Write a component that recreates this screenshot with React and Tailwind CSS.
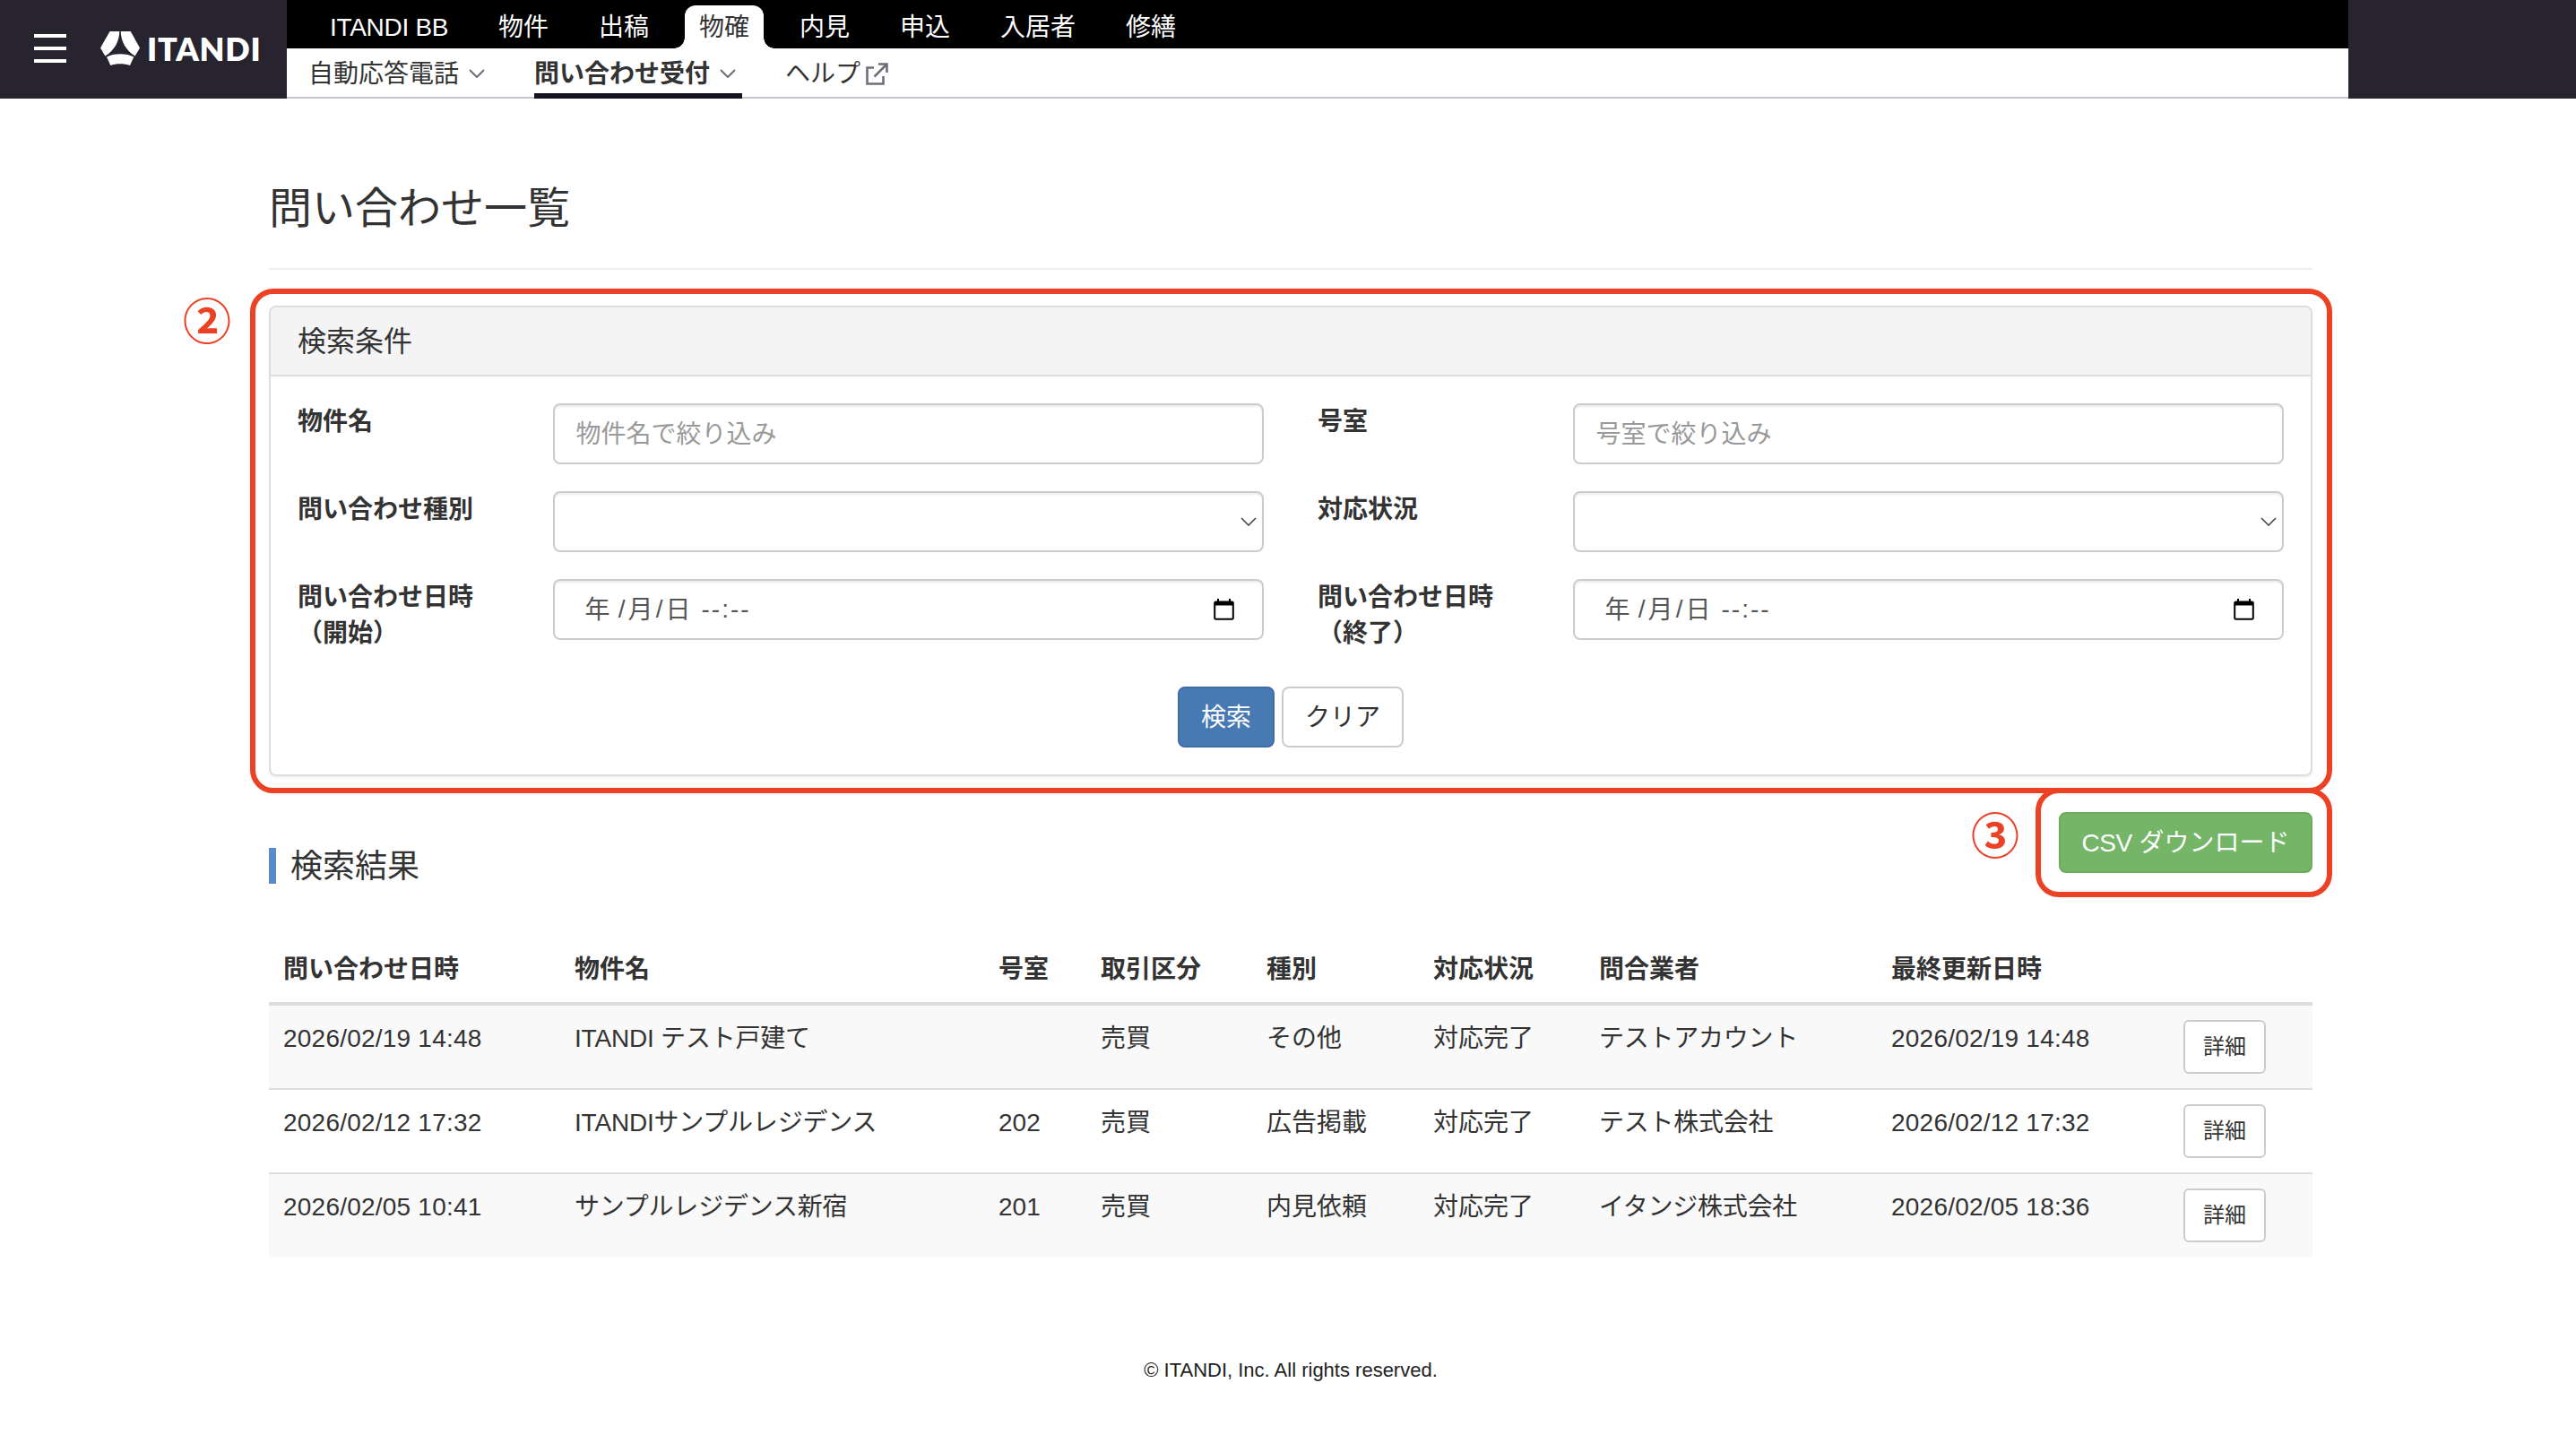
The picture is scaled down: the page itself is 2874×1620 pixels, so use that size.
const tabs = ['物件', '出稿', '物確', '内見', '申込', '入居者', '修繕'];

const columns = [
	{ label: '問い合わせ日時', key: 'askedAt', width: 'w-[325px]' },
	{ label: '物件名', key: 'name', width: 'w-[473px]' },
	{ label: '号室', key: 'room', width: 'w-[114px]' },
	{ label: '取引区分', key: 'deal', width: 'w-[185px]' },
	{ label: '種別', key: 'type', width: 'w-[186px]' },
	{ label: '対応状況', key: 'status', width: 'w-[185px]' },
	{ label: '問合業者', key: 'agent', width: 'w-[326px]' },
	{ label: '最終更新日時', key: 'updatedAt', width: 'w-[326px]' },
];

// letter spacing per column
const tracking = {
	askedAt: 'tracking-[0.22px]',
	name: 'tracking-[-0.2px]',
	agent: 'tracking-[-0.25px]',
	updatedAt: 'tracking-[0.22px]',
};

const inquiries = [
	{
		askedAt: '2026/02/19 14:48',
		name: 'ITANDI テスト戸建て',
		room: '',
		deal: '売買',
		type: 'その他',
		status: '対応完了',
		agent: 'テストアカウント',
		updatedAt: '2026/02/19 14:48',
	},
	{
		askedAt: '2026/02/12 17:32',
		name: 'ITANDIサンプルレジデンス',
		room: '202',
		deal: '売買',
		type: '広告掲載',
		status: '対応完了',
		agent: 'テスト株式会社',
		updatedAt: '2026/02/12 17:32',
	},
	{
		askedAt: '2026/02/05 10:41',
		name: 'サンプルレジデンス新宿',
		room: '201',
		deal: '売買',
		type: '内見依頼',
		status: '対応完了',
		agent: 'イタンジ株式会社',
		updatedAt: '2026/02/05 18:36',
	},
];

const inputClass =
	'flex items-center h-[68px] w-full rounded-lg border-2 border-[#ccc] bg-white shadow-[inset_0_2px_2px_rgba(0,0,0,0.075)]';

function Chevron({ className }) {
	return (
		<svg
			viewBox="0 0 18 10"
			className={className}
			fill="none"
			stroke="currentColor"
		>
			<path d="M1 1l8 8 8-8" />
		</svg>
	);
}

function Logo() {
	return (
		<div className="flex items-center ml-[38px] mb-[2px]">
			<svg viewBox="0 0 44 38" className="w-11 h-[38px]" fill="#fff">
				<path d="M10.500 0H21.300C21 11 16 21 5.300 27.500L0 18.500Z" />
				<path d="M22.700 0H33.700L44 18.500L38.700 27.500C28 21 23 11 22.700 0Z" />
				<path d="M7 28.500C14 24 30 24 37.300 28.500L33 38C27 35.500 17 35.500 11.300 38Z" />
			</svg>
			<span className="ml-2 text-[36px] leading-none font-extrabold tracking-[0.8px] text-white font-['Lato','Noto_Sans_CJK_JP',sans-serif]">
				ITANDI
			</span>
		</div>
	);
}

function Header() {
	return (
		<header className="flex h-[110px] bg-[#27242f]">
			<div className="flex items-center w-[320px] pl-[38px]">
				<div className="flex flex-col gap-[10px] mb-[2px]">
					<span className="w-9 h-1 bg-white" />
					<span className="w-9 h-1 bg-white" />
					<span className="w-9 h-1 bg-white" />
				</div>
				<Logo />
			</div>
			<div className="flex flex-col w-[2300px] bg-white">
				<nav className="flex items-end h-[54px] pl-8 bg-black text-white">
					<span className="w-[176px] h-12 px-4 leading-[50px] whitespace-nowrap tracking-[-0.3px]">
						ITANDI BB
					</span>
					{tabs.map((tab) =>
						tab === '物確' ? (
							<span
								key={tab}
								className="relative h-12 mx-3 px-4 leading-[50px] bg-white text-[#333] rounded-t-[12px]"
							>
								{tab}
								{/* flared feet of the active tab */}
								<span className="absolute bottom-0 -left-3 size-3 bg-[radial-gradient(circle_at_0_0,#000_11.500px,#fff_12px)]" />
								<span className="absolute bottom-0 -right-3 size-3 bg-[radial-gradient(circle_at_100%_0,#000_11.500px,#fff_12px)]" />
							</span>
						) : (
							<span
								key={tab}
								className="h-12 mx-3 px-4 leading-[50px]"
							>
								{tab}
							</span>
						)
					)}
				</nav>
				<nav className="flex gap-12 h-14 pl-6 border-b-2 border-[#c6c5cd]">
					<span className="flex items-center h-14 w-[204px]">
						<span className="pt-[2px]">自動応答電話</span>
						<Chevron className="ml-[11px] w-[18px] h-[10px] text-[#6f6e7a] stroke-2" />
					</span>
					<span className="flex items-center h-14 w-[232px] pt-[6px] border-b-[6px] border-[#151320] font-bold">
						<span className="pt-[2px]">問い合わせ受付</span>
						<Chevron className="ml-[11px] w-[18px] h-[10px] text-[#6f6e7a] stroke-2" />
					</span>
					<span className="flex items-center h-14">
						<span className="pt-[2px]">ヘルプ</span>
						<svg
							viewBox="0 0 25 25"
							className="ml-[6px] size-[25px] text-[#6f6e7a]"
							fill="none"
							stroke="currentColor"
							strokeWidth="2.6"
						>
							<path d="M9 5.500H1.500V23.500H19.500V15" />
							<path d="M14 1.500H23.500V11M23 2L9.500 15.500" />
						</svg>
					</span>
				</nav>
			</div>
		</header>
	);
}

function Field({ label, note, children }) {
	return (
		<div className="flex h-[98px] w-[1138px] px-[30px]">
			<div className="w-[284.500px] shrink-0 pt-px font-bold leading-10 whitespace-nowrap">
				{label}
				{note && <div>{note}</div>}
			</div>
			<div className="flex-1">{children}</div>
		</div>
	);
}

function SelectBox() {
	return (
		<div className={inputClass}>
			<Chevron className="ml-auto mr-[6px] w-[18px] h-[10px] text-[#444] stroke-[1.6]" />
		</div>
	);
}

function DateBox() {
	return (
		<div className={`${inputClass} pl-[34px] pr-[31px] text-[#555]`}>
			<span className="pt-px">年</span>
			<span className="ml-[6px] w-[14px] text-center">/</span>
			<span className="pt-px">月</span>
			<span className="w-[14px] text-center">/</span>
			<span className="pt-px">日</span>
			<span className="ml-3 tracking-[2px]">--:--</span>
			<svg viewBox="0 0 23 24" className="ml-auto w-[23px] h-6">
				<path d="M5 0v4M18 0v4" stroke="#000" strokeWidth="2" />
				<rect
					x="1.200"
					y="3.500"
					width="20.600"
					height="19.300"
					rx="1.500"
					fill="none"
					stroke="#000"
					strokeWidth="2"
				/>
				<path d="M1 3h21v4.500H1z" />
			</svg>
		</div>
	);
}

function SearchPanel() {
	return (
		<section className="relative mt-10 h-[525px] rounded-lg border-2 border-[#ddd] bg-white shadow-[0_2px_2px_rgba(0,0,0,0.05)]">
			<h2 className="h-[77px] pl-[30px] rounded-t-md border-b-2 border-[#ddd] bg-[#f4f4f4] text-[32px] leading-[76px]">
				検索条件
			</h2>
			<div className="flex flex-wrap pt-[30px]">
				<Field label="物件名">
					<div className={`${inputClass} pl-6 pt-[2px] text-[#999]`}>
						物件名で絞り込み
					</div>
				</Field>
				<Field label="号室">
					<div className={`${inputClass} pl-6 pt-[2px] text-[#999]`}>
						号室で絞り込み
					</div>
				</Field>
				<Field label="問い合わせ種別">
					<SelectBox />
				</Field>
				<Field label="対応状況">
					<SelectBox />
				</Field>
				<Field label="問い合わせ日時" note="（開始）">
					<DateBox />
				</Field>
				<Field label="問い合わせ日時" note="（終了）">
					<DateBox />
				</Field>
			</div>
			<div className="flex justify-center gap-2 mt-[22px]">
				<button className="h-[68px] w-[108px] pt-px rounded-lg border-2 border-[#3f6da6] bg-[#4779b3] text-white">
					検索
				</button>
				<button className="h-[68px] w-[136px] pt-px rounded-lg border-2 border-[#ccc] bg-white">
					クリア
				</button>
			</div>
			{/* callout 2 */}
			<div className="absolute -left-[23px] -top-[21px] w-[2323px] h-[563px] rounded-[26px] border-[6px] border-[#eb4226]" />
			<span className="absolute -left-[98px] -top-[10px] text-[54px] leading-[54px] font-bold text-[#eb4226]">
				②
			</span>
		</section>
	);
}

function Results() {
	return (
		<section>
			<div className="relative flex justify-between h-[156px] pt-10">
				<h2 className="mt-10 h-10 pl-4 border-l-8 border-[#5b8bc7] text-[36px] leading-[41px]">
					検索結果
				</h2>
				<button className="h-[68px] w-[283px] pt-px rounded-lg border-2 border-[#6bab5e] bg-[#74b567] text-white">
					<span className="tracking-[-0.4px]">CSV</span> ダウンロード
				</button>
				{/* callout 3 */}
				<div className="absolute left-[1971px] top-[13px] w-[331px] h-[122px] rounded-[26px] border-[6px] border-[#eb4226]" />
				<span className="absolute left-[1899px] top-[41px] text-[54px] leading-[54px] font-bold text-[#eb4226]">
					③
				</span>
			</div>
			<table className="mt-6 w-full table-fixed border-separate border-spacing-0 text-left">
				<thead>
					<tr className="h-[76px]">
						{columns.map((col) => (
							<th
								key={col.key}
								className={`${col.width} pl-4 py-4 border-b-4 border-[#ddd] leading-10 font-bold`}
							>
								{col.label}
							</th>
						))}
						<th className="w-[160px] border-b-4 border-[#ddd]" />
					</tr>
				</thead>
				<tbody>
					{inquiries.map((row, i) => {
						const line =
							i === 0 ? 'h-[92px]' : 'h-[94px] border-t-2 border-[#ddd]';
						return (
							<tr key={row.askedAt} className="odd:bg-[#f9f9f9]">
								{columns.map((col) => (
									<td
										key={col.key}
										className={`${line} ${tracking[col.key] || ''} pl-4 pt-[17px] leading-10 align-top whitespace-nowrap`}
									>
										{row[col.key]}
									</td>
								))}
								<td className={`${line} pl-4 pt-4 align-top`}>
									<button className="block h-[60px] w-[92px] rounded-md border-2 border-[#ccc] bg-white text-[24px]">
										詳細
									</button>
								</td>
							</tr>
						);
					})}
				</tbody>
			</table>
		</section>
	);
}

export default function App() {
	return (
		<div className="h-[1620px] w-[2874px] overflow-hidden bg-white text-[28px] leading-10 text-[#333] font-['Liberation_Sans','Noto_Sans_CJK_JP',sans-serif]">
			<Header />
			<main className="w-[2280px] ml-[300px]">
				<h1 className="h-[191px] pt-[93px] border-b-2 border-[#eee] text-[48px] leading-[60px]">
					問い合わせ一覧
				</h1>
				<SearchPanel />
				<Results />
			</main>
			<footer className="mt-[107px] w-[2280px] ml-[300px] text-center text-[22px] text-[#222]">
				© ITANDI, Inc. All rights reserved.
			</footer>
		</div>
	);
}
